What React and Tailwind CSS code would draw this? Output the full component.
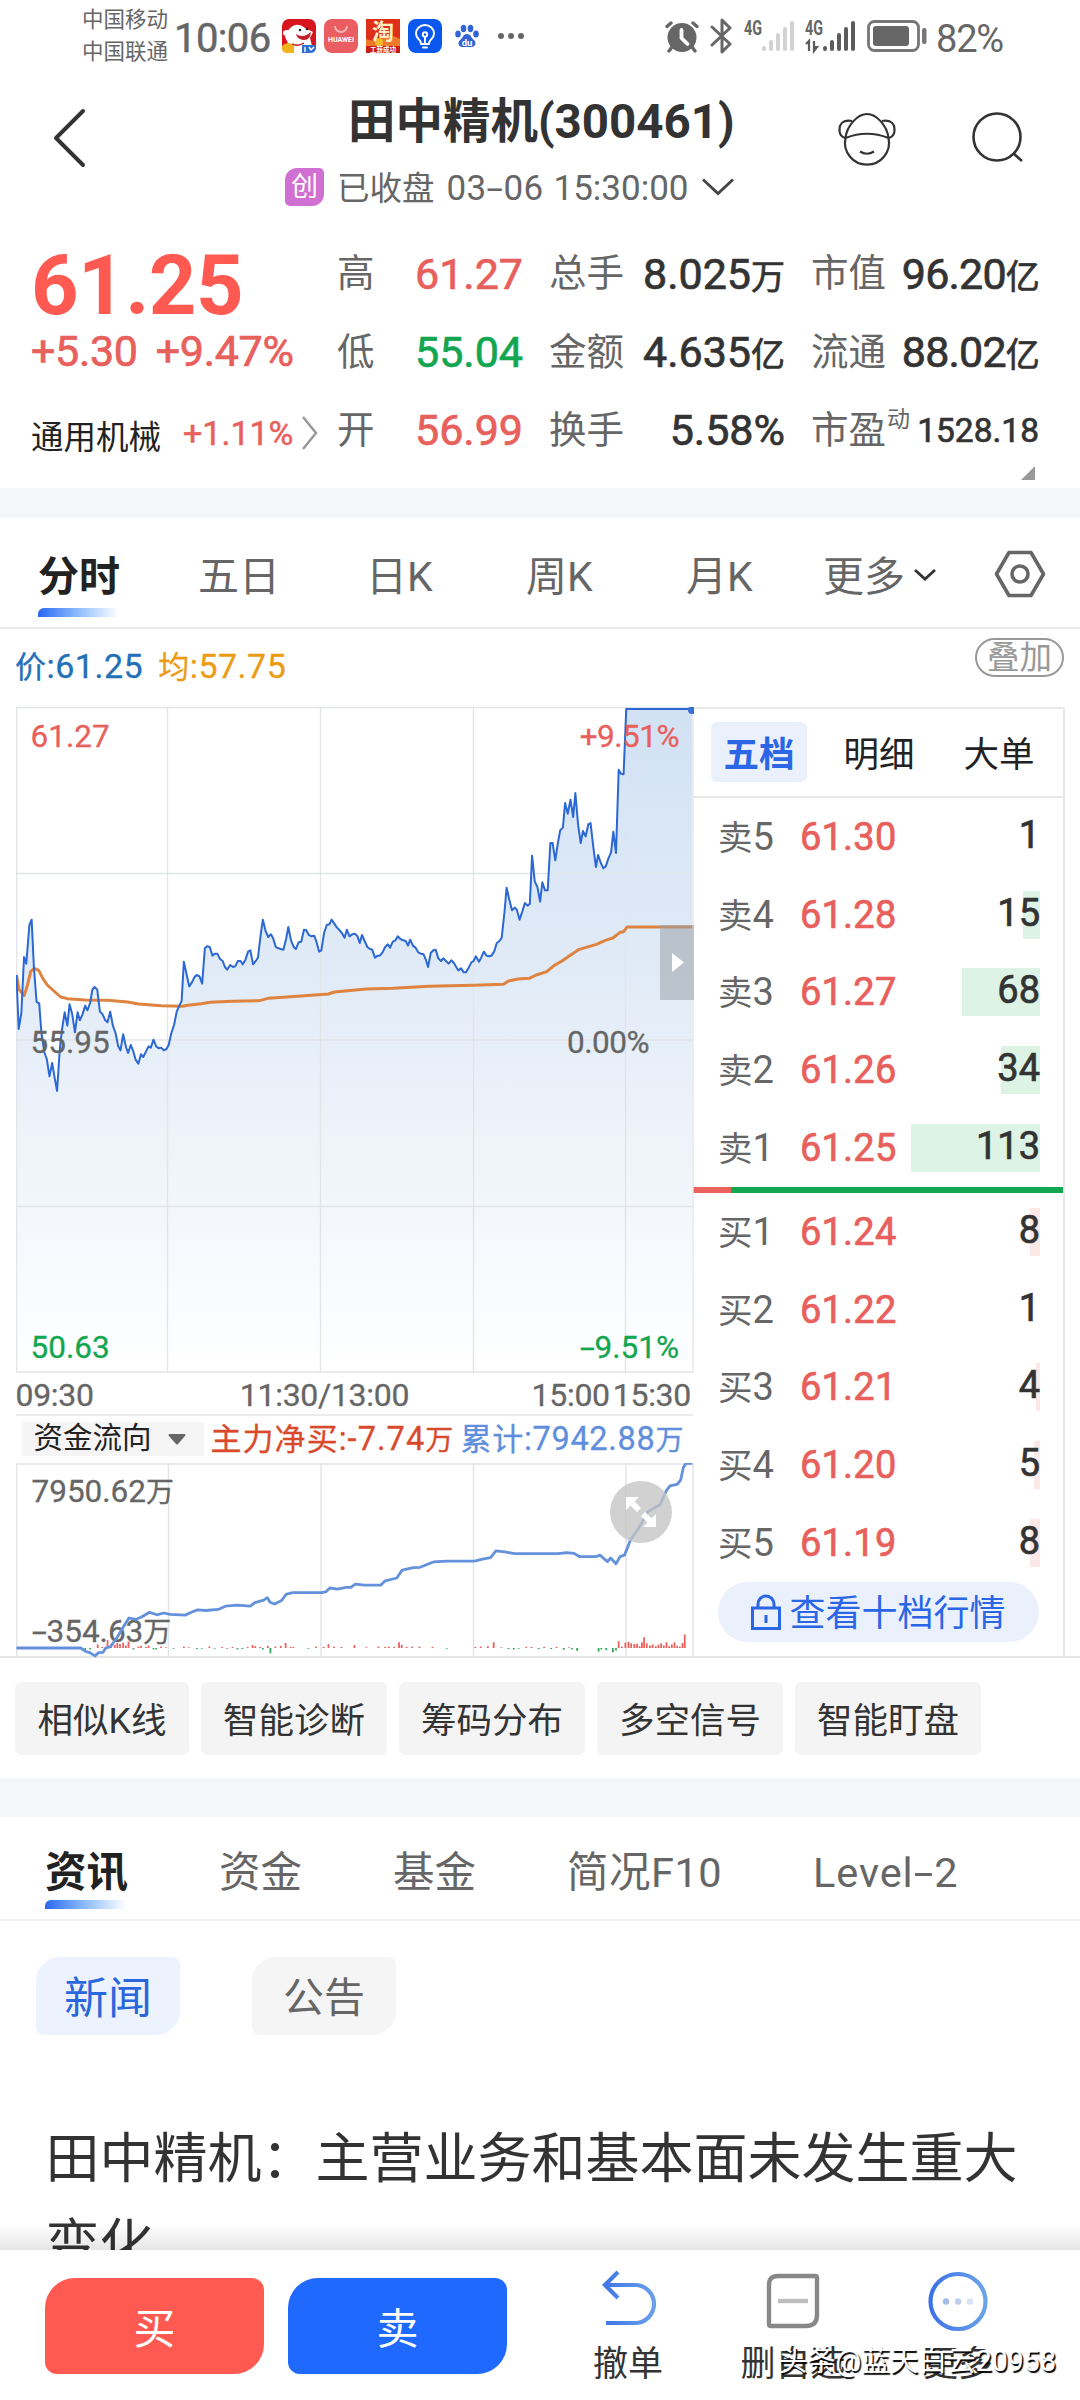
import { useState } from "react";

const stats = [
  [
    { label: "高", value: "61.27", color: "text-[#e8605c]" },
    { label: "低", value: "55.04", color: "text-[#12a650]" },
    { label: "开", value: "56.99", color: "text-[#e8605c]" },
  ],
  [
    { label: "总手", value: "8.025万" },
    { label: "金额", value: "4.635亿" },
    { label: "换手", value: "5.58%" },
  ],
  [
    { label: "市值", value: "96.20亿" },
    { label: "流通", value: "88.02亿" },
    { label: "市盈", sup: "动", value: "1528.18", small: true },
  ],
];

const sells = [
  { name: "卖5", price: "61.30", qty: 1, bar: 0 },
  { name: "卖4", price: "61.28", qty: 15, bar: 17 },
  { name: "卖3", price: "61.27", qty: 68, bar: 78 },
  { name: "卖2", price: "61.26", qty: 34, bar: 39 },
  { name: "卖1", price: "61.25", qty: 113, bar: 129 },
];

const buys = [
  { name: "买1", price: "61.24", qty: 8, bar: 10 },
  { name: "买2", price: "61.22", qty: 1, bar: 0 },
  { name: "买3", price: "61.21", qty: 4, bar: 4 },
  { name: "买4", price: "61.20", qty: 5, bar: 6 },
  { name: "买5", price: "61.19", qty: 8, bar: 10 },
];

const pricePoints =
  "36,826 41,988 47,940 53,772 58,792 65,676 70,660 75,800 81,906 87,912 92,1000 99,1060 104,1078 110,1130 116,1090 121,1130 127,1174 133,1050 138,990 144,938 150,978 155,914 161,944 167,998 173,938 178,962 184,944 190,918 195,932 201,910 206,870 211,862 217,870 223,936 229,944 235,962 240,968 246,936 252,978 258,1000 264,1040 269,1052 275,1004 281,1040 286,1060 292,1036 298,1056 303,1080 309,1092 315,1064 320,1072 326,1056 332,1040 337,1044 343,1020 349,1040 355,1046 360,1044 366,1052 372,1048 377,1036 383,1000 389,976 395,936 400,920 406,904 411,786 417,824 423,860 429,848 435,832 440,826 446,830 452,852 458,746 463,740 469,742 475,768 480,762 486,762 492,778 498,784 503,802 508,810 515,796 521,802 526,800 532,784 538,784 543,794 549,780 555,756 560,752 566,794 572,784 577,774 583,706 588,660 594,694 600,712 606,704 611,716 617,742 623,746 628,748 634,750 640,718 645,682 651,722 657,742 662,748 668,728 674,726 680,690 685,692 691,706 697,710 703,708 708,726 714,756 719,752 725,700 731,676 737,674 742,660 748,672 754,684 760,692 765,700 771,714 776,690 782,710 788,704 794,702 800,710 805,730 810,706 816,724 822,742 828,748 833,750 839,774 845,768 850,768 856,758 862,742 868,734 873,744 879,726 885,722 890,710 896,718 902,722 908,724 913,738 918,720 924,738 930,744 936,758 942,762 948,764 953,780 958,802 964,760 970,752 975,750 981,776 987,784 992,776 998,784 1004,792 1010,782 1016,790 1021,802 1026,812 1032,806 1038,818 1043,818 1049,804 1055,788 1060,784 1065,770 1072,786 1077,774 1083,756 1089,768 1094,770 1100,768 1106,756 1112,730 1118,724 1123,714 1129,640 1134,564 1140,600 1146,632 1152,624 1157,630 1163,660 1169,636 1175,610 1181,618 1186,612 1191,468 1197,546 1203,562 1209,606 1214,548 1220,572 1226,572 1232,430 1237,430 1243,482 1249,428 1254,392 1260,384 1265,310 1271,342 1277,300 1283,352 1288,280 1294,374 1300,430 1305,394 1311,410 1317,374 1322,370 1328,440 1334,502 1339,466 1345,490 1351,506 1356,500 1362,476 1368,458 1373,396 1379,460 1385,210 1390,222 1396,224 1402,28 1550,28";

const avgPoints =
  "36,826 42,870 53,888 60,860 68,815 76,806 86,812 95,836 105,856 120,874 135,892 150,897 190,901 240,902 285,907 310,913 360,918 408,920 420,917 450,912 470,908 520,905 580,903 600,896 650,891 735,883 748,877 820,868 880,866 960,860 1060,857 1127,854 1138,844 1160,838 1185,836 1200,826 1224,816 1240,798 1258,784 1275,768 1295,750 1335,734 1355,722 1372,715 1388,698 1396,696 1404,682 1550,682";

const flowPoints =
  "36,1536 180,1536 190,1545 200,1549 212,1558 220,1549 230,1548 236,1536 247,1532 262,1505 274,1480 288,1452 303,1456 315,1450 322,1445 334,1436 350,1443 366,1438 380,1442 414,1444 428,1436 442,1429 460,1431 488,1428 504,1419 530,1416 560,1419 570,1409 590,1402 598,1395 604,1408 614,1413 630,1403 640,1386 655,1381 720,1381 730,1378 738,1368 755,1371 775,1366 785,1366 795,1357 815,1360 852,1360 862,1348 888,1340 900,1318 925,1311 940,1310 970,1295 1000,1293 1062,1293 1080,1287 1098,1283 1110,1264 1130,1267 1152,1272 1250,1272 1268,1269 1285,1271 1297,1280 1335,1280 1343,1276 1360,1294 1367,1284 1379,1300 1388,1280 1398,1276 1412,1232 1430,1200 1440,1178 1450,1155 1478,1134 1492,1095 1500,1082 1516,1078 1524,1065 1530,1030 1536,1019 1550,1019";

// [x, height], negative is outflow
const flowBars = [
  [190, -5], [201, -4], [218, 10], [228, 3], [240, 22], [248, 12], [256, 9], [262, 14], [268, 11], [275, 15], [281, 7],
  [287, 18], [298, -4], [309, 4], [315, 6], [326, 3], [332, 7], [343, -4], [349, -4], [360, 4], [371, 2], [388, -2],
  [411, 4], [422, 2], [440, -3], [451, -2], [468, 4], [480, -2], [497, 3], [508, -2], [520, 3], [531, -4], [542, -3],
  [554, 3], [565, 8], [571, 5], [582, 3], [588, -4], [599, 6], [605, -15], [616, 4], [628, 6], [639, 14], [650, 3],
  [656, 3], [690, -2], [707, 4], [724, 3], [735, 11], [747, 4], [764, 3], [793, 8], [820, 2], [847, 4], [862, 3],
  [870, 4], [882, 3], [893, 16], [899, 9], [910, 3], [922, 4], [939, 4], [968, 3], [1000, -2], [1064, 3], [1076, 4],
  [1092, 5], [1105, 16], [1122, 2], [1138, -3], [1150, -4], [1161, -2], [1178, 3], [1190, 3], [1206, -3], [1218, 3],
  [1234, -3], [1246, 3], [1262, -5], [1274, 2], [1280, -4], [1292, -8], [1340, -10], [1346, -4], [1357, -6],
  [1372, -12], [1379, -7], [1385, 19], [1392, 4], [1400, 15], [1407, 17], [1413, 13], [1420, 11], [1426, 12],
  [1432, 5], [1437, 16], [1442, 30], [1448, 13], [1455, 7], [1461, 10], [1468, 5], [1474, 9], [1480, 13], [1486, 7],
  [1492, 16], [1498, 5], [1504, 10], [1510, 16], [1516, 6], [1522, 4], [1528, 14], [1533, 38],
];

// the plain hyphen is too short next to the digits
function Dash() {
  return <span className="mx-[0.1em] inline-block scale-x-[1.7]">-</span>;
}

function Signal({ color, faded }) {
  return (
    <svg className="ml-[11px] h-[34px] w-[50px] overflow-visible" viewBox="0 0 50 34">
      <text x="0" y="16" fontSize="20" fontWeight="700" fill="#666" textLength="18" lengthAdjust="spacingAndGlyphs">4G</text>
      {!faded && <path d="M1 25l3-3v10M9 22v10l3-4h-3" fill="none" stroke="#5c5c5c" strokeWidth="2.200" />}
      <g stroke={color} strokeWidth="4" strokeLinecap="round">
        <path d="M20 29v1M27 23v7M34 16v14M41 10v20M48 4v26" />
      </g>
    </svg>
  );
}

function StatusBar() {
  return (
    <div className="flex h-[72px] shrink-0 items-center justify-between pl-[82px] pr-[77px] text-[#666]">
      <div className="flex items-center">
        <div className="w-[92px] text-[21.5px] leading-[32px]">
          <div>中国移动</div>
          <div>中国联通</div>
        </div>
        <div className="w-[108px] pt-[5px] text-[40px] leading-none tracking-[-0.6px] [-webkit-text-stroke:0.5px]">10:06</div>
        <div className="flex items-center gap-[8px]">
          <svg className="h-[34px] w-[34px]" viewBox="0 0 34 34">
            <rect width="34" height="34" rx="7" fill="#d8141c" />
            <path d="M7 10 Q15 2 23 9 L31 13 L28 19 L30 27 V34 H5 L7 26 L3 18Z" fill="#fff" />
            <ellipse cx="5" cy="14" rx="4" ry="3" fill="#fff" />
            <path d="M14 15 Q21 20 29 13 Q28 22 21 21 Q15 20 14 15Z" fill="#c22028" />
            <circle cx="18" cy="11" r="1.300" fill="#222" />
            <circle cx="25" cy="10" r="1.300" fill="#222" />
            <path d="M10 25 Q16 28 22 24" stroke="#c22028" strokeWidth="1.500" fill="none" />
            <path d="M0 27 Q6 21 12 27 V34 H5 Q0 34 0 29Z" fill="#f2b21b" />
            <path d="M20 26 H34 V28 Q34 34 28 34 H20Z" fill="#2f6fd0" />
            <path d="M23 28v5M27 28l2 3 3-3" stroke="#fff" strokeWidth="1.400" fill="none" />
          </svg>
          <svg className="h-[34px] w-[34px]" viewBox="0 0 34 34">
            <rect width="34" height="34" rx="8" fill="#ea5d60" />
            <path d="M11 7a6 6 0 0 0 12 0" fill="none" stroke="#f6b4b4" strokeWidth="1.800" />
            <text x="17" y="23" textAnchor="middle" fontSize="7" fontWeight="700" fill="#fff" textLength="26">HUAWEI</text>
          </svg>
          <svg className="h-[34px] w-[34px]" viewBox="0 0 34 34">
            <rect width="34" height="34" fill="#dd2f1a" />
            <path d="M0 20 Q10 24 17 19 T34 20 V29 H0Z" fill="#f07a2c" />
            <circle cx="13" cy="23" r="4" fill="#f6b92e" />
            <text x="17" y="20" textAnchor="middle" fontSize="22" fontWeight="700" fill="#ffeec4">淘</text>
            <rect y="27" width="34" height="7" fill="#c81e12" />
            <text x="17" y="33" textAnchor="middle" fontSize="6.500" fontWeight="700" fill="#fff">工薪成功</text>
          </svg>
          <svg className="h-[34px] w-[34px]" viewBox="0 0 34 34">
            <rect width="34" height="34" rx="8" fill="#0a58ee" />
            <g fill="none" stroke="#fff" strokeWidth="1.900" strokeLinecap="round" strokeLinejoin="round">
              <path d="M13 25 Q13 22 10.500 20 Q8 17.500 8 14.500 a9 8.500 0 0 1 18 0 Q26 17.500 23.500 20 Q21 22 21 25 Z" />
              <path d="M17 18v7M15 28.500h4" />
              <circle cx="17" cy="15.500" r="2.200" />
            </g>
          </svg>
          <svg className="h-[34px] w-[34px]" viewBox="0 0 34 34">
            <g fill="#3264d8">
              <ellipse cx="8" cy="15" rx="2.800" ry="3.500" />
              <ellipse cx="13.500" cy="9.500" rx="2.800" ry="3.700" />
              <ellipse cx="20.500" cy="9.500" rx="2.800" ry="3.700" />
              <ellipse cx="26" cy="15" rx="2.800" ry="3.500" />
              <path d="M17 15 c-4 0-4 4-7 6 c-3 3-1 7 2 7 h10 c3 0 5-4 2-7 c-3-2-3-6-7-6z" />
            </g>
            <text x="17" y="26.500" textAnchor="middle" fontSize="9.500" fontWeight="700" fill="#fff">du</text>
          </svg>
          <div className="ml-[6px] flex gap-[4px]">
            <i className="h-[6px] w-[6px] rounded-full bg-[#666]" />
            <i className="h-[6px] w-[6px] rounded-full bg-[#666]" />
            <i className="h-[6px] w-[6px] rounded-full bg-[#666]" />
          </div>
        </div>
      </div>

      <div className="flex items-center">
        <svg className="h-[34px] w-[34px]" viewBox="0 0 34 34">
          <circle cx="17" cy="18.500" r="14.500" fill="#666" />
          <g fill="none" stroke="#666" strokeWidth="3.400" strokeLinecap="round">
            <path d="M2 7.500 L6 4M28 4 L32 7.500M7 28l-3 4M27 28l3 4" />
          </g>
          <path d="M16.500 11v8l6 6" fill="none" stroke="#fff" strokeWidth="3.800" strokeLinecap="round" />
        </svg>
        <svg className="ml-[11px] h-[36px] w-[23px]" viewBox="0 0 23 36" fill="none" stroke="#666" strokeWidth="3" strokeLinejoin="round" strokeLinecap="round">
          <path d="M2 9 L20 26 L12 34 V2 L20 10 L2 27" />
        </svg>
        <Signal color="#d2d2d2" faded />
        <Signal color="#5c5c5c" />
        <svg className="ml-[12px] h-[32px] w-[60px]" viewBox="0 0 60 32">
          <rect x="1.500" y="1.500" width="50" height="29" rx="6" fill="none" stroke="#777" strokeWidth="2.800" />
          <rect x="6" y="6" width="36" height="20" rx="3" fill="#666" />
          <rect x="55" y="8" width="4.500" height="16" rx="2" fill="#777" />
        </svg>
        <div className="ml-[9px] pt-[5px] text-[38px] leading-none tracking-[-1.2px]">82%</div>
      </div>
    </div>
  );
}

function Header() {
  return (
    <div className="flex h-[158px] shrink-0 items-start pl-[52px]">
      <svg className="mt-[36px] h-[60px] w-[36px]" viewBox="0 0 36 60" fill="none" stroke="#333" strokeWidth="4" strokeLinecap="round" strokeLinejoin="round">
        <path d="M31 3 L4 30 L31 57" />
      </svg>
      <div className="ml-[197px] w-[553px]">
        <div className="ml-[63px] mt-[25px] text-[47.500px] font-bold leading-[50px] text-[#333]">田中精机(300461)</div>
        <div className="mt-[19px] flex items-center text-[#666]">
          <div className="flex h-[38px] w-[39px] items-center justify-center rounded-[5px] rounded-br-[12px] rounded-tl-[12px] bg-[#d070d2] text-[27px] leading-none text-white">创</div>
          <div className="ml-[13px] pt-[3px] text-[32.500px] leading-[38px]">已收盘</div>
          <div className="ml-[12px] w-[107px] pt-[4px] text-[35px] leading-[38px] tracking-[0.3px]">03<Dash />06</div>
          <div className="w-[148px] pt-[4px] text-[35px] leading-[38px]">15:30:00</div>
          <svg className="h-[18px] w-[32px]" viewBox="0 0 32 18" fill="none" stroke="#444" strokeWidth="2.800">
            <path d="M1 1.500 L16 15.500 L31 1.500" />
          </svg>
        </div>
      </div>
      <svg className="mt-[40px] h-[54px] w-[58px]" viewBox="0 0 58 54" fill="none" stroke="#333" strokeWidth="2.200">
        <path d="M7.500 26 C9 13 20 2 29 2 C38 2 49 13 50.500 26" />
        <path d="M7.500 26 A22 22 0 1 0 50.500 26 Q29 17.500 7.500 26Z" />
        <path d="M14 9 Q1 7 1.500 19 Q2 25 7.500 26M44 9 Q57 7 56.500 19 Q56 25 50.500 26" />
        <path d="M22 39.500 Q29 44 36 39.500" />
      </svg>
      <svg className="ml-[75px] mt-[40px] h-[54px] w-[54px]" viewBox="0 0 54 54" fill="none" stroke="#333" strokeWidth="2.600">
        <circle cx="26" cy="25" r="23.500" />
        <path d="M42 41 L51 49" />
      </svg>
    </div>
  );
}

function Quote() {
  return (
    <div className="flex h-[258px] shrink-0 pl-[31px]">
      <div className="w-[306px] text-[#e8605c]">
        <div className="pt-[14px] text-[83px] font-bold leading-[84px] tracking-[-0.5px] text-[#ff5a52]">61.25</div>
        <div className="flex gap-[18px] pt-[1px] text-[43px] leading-[44px] tracking-[-0.3px] [-webkit-text-stroke:0.7px]">
          <span>+5.30</span>
          <span>+9.47%</span>
        </div>
        <div className="mt-[35px] flex items-center">
          <span className="pt-[10px] text-[32.500px] leading-[40px] text-[#222]">通用机械</span>
          <span className="ml-[22px] text-[34px] leading-[40px] [-webkit-text-stroke:0.5px]">+1.11%</span>
          <svg className="ml-[8px] h-[34px] w-[16px]" viewBox="0 0 16 34" fill="none" stroke="#999" strokeWidth="2.500">
            <path d="M1 1 L14 17 L1 33" />
          </svg>
        </div>
      </div>
      <div>
        <div className="grid grid-cols-[186px_236px_228px] gap-x-[26px] pt-[5px]">
          {stats.map((col, i) => (
            <div key={i}>
              {col.map((s) => (
                <div key={s.label} className="flex h-[78.300px] items-center justify-between leading-none">
                  <span className="flex text-[37.500px] text-[#666]">
                    {s.label}
                    {s.sup && <sup className="top-0 -mt-[4px] ml-[1px] text-[23px] leading-none">{s.sup}</sup>}
                  </span>
                  <span className={`[-webkit-text-stroke:0.7px] ${s.small ? "text-[33.500px]" : "text-[43px]"} ${i === 2 && !s.small ? "tracking-[-0.8px]" : ""} ${s.color || "text-[#333]"}`}>
                    {s.value.replace(/[万亿]/, "")}
                    {/[万亿]/.test(s.value) && <span className="text-[34px]">{s.value.slice(-1)}</span>}
                  </span>
                </div>
              ))}
            </div>
          ))}
        </div>
        <svg className="-mt-[4px] ml-[684px] h-[14px] w-[14px]" viewBox="0 0 14 14">
          <path d="M14 0V14H0Z" fill="#999" />
        </svg>
      </div>
    </div>
  );
}

function PeriodTabs() {
  return (
    <div className="flex h-[111px] shrink-0 items-start border-b-2 border-[#e8e8e8] pl-[38px] text-[41px] leading-[44px] text-[#666]">
      <div className="mt-[37px] w-[160px]">
        <div className="font-bold text-[#222]">分时</div>
        <div className="mt-[9px] h-[9px] w-[81px] rounded-tl-[6px] bg-linear-to-r from-[#2a66f0] via-[#8fbcfb] to-white" />
      </div>
      <div className="mt-[37px] w-[168px]">五日</div>
      <div className="mt-[37px] w-[160px]">日K</div>
      <div className="mt-[37px] w-[160px]">周K</div>
      <div className="mt-[37px] w-[137px]">月K</div>
      <div className="mt-[37px] flex w-[171px] items-center">
        更多
        <svg className="-mt-[4px] ml-[9px] h-[14px] w-[22px]" viewBox="0 0 22 14" fill="none" stroke="#333" strokeWidth="2.800">
          <path d="M1 2 L11 11 L21 2" />
        </svg>
      </div>
      <svg className="mt-[32px] h-[48px] w-[52px]" viewBox="0 0 52 48" fill="none" stroke="#666" strokeWidth="3.600" strokeLinejoin="round">
        <path d="M15 2.500 H37 L49.500 24 L37 45.500 H15 L2.500 24Z" />
        <circle cx="26" cy="24" r="8" />
      </svg>
    </div>
  );
}

function PriceChart() {
  return (
    <div className="relative h-[666px]">
      <svg className="h-[666px] w-[678px]" viewBox="0 0 678 666">
        <defs>
          <linearGradient id="area" x1="0" y1="0" x2="0" y2="1">
            <stop offset="0" stopColor="#d2e2f4" />
            <stop offset="0.400" stopColor="#e1ebf7" />
            <stop offset="0.700" stopColor="#f0f5fb" />
            <stop offset="1" stopColor="#ffffff" />
          </linearGradient>
        </defs>
        <g transform="scale(0.44643 0.33333) translate(-35 -22)">
          <polygon points={`36,2016 ${pricePoints} 1550,2016`} fill="url(#area)" />
        </g>
        <g stroke="#e2e5e8" strokeWidth="1.300" fill="none">
          <path d="M0.700 0.700H677V665H0.700Z M151.500 0V666M304.500 0V666M457.500 0V666M609.500 0V666M0 166.500H677M0 333H677M0 499.500H677" />
        </g>
        <g transform="scale(0.44643 0.33333) translate(-35 -22)" fill="none" strokeLinejoin="round">
          <polyline points={avgPoints} stroke="#de8340" strokeWidth="3" vectorEffect="non-scaling-stroke" />
          <polyline points={pricePoints} stroke="#2c68d4" strokeWidth="2" vectorEffect="non-scaling-stroke" />
        </g>
        <circle cx="676" cy="3" r="4" fill="#3672d6" />
        <rect x="644" y="218" width="34" height="75" fill="#9aa3aa" fillOpacity="0.550" />
        <path d="M656 246 L668 255.500 L656 265Z" fill="#fff" />
      </svg>
      <div className="absolute inset-0 flex flex-col justify-between pb-[9px] pl-[15px] pr-[14px] pt-[14px] text-[31.500px] leading-[32px] [-webkit-text-stroke:0.3px]">
        <div className="flex justify-between text-[#e8605c]">
          <span>61.27</span>
          <span className="tracking-[-0.5px]">+9.51%</span>
        </div>
        <div className="flex justify-between pr-[30px] pt-[2px] text-[#666]">
          <span>55.95</span>
          <span className="tracking-[-0.5px]">0.00%</span>
        </div>
        <div className="flex justify-between text-[#12a650]">
          <span>50.63</span>
          <span><Dash />9.51%</span>
        </div>
      </div>
    </div>
  );
}

function FlowChart() {
  return (
    <div className="relative h-[195px]">
      <svg className="h-[195px] w-[678px]" viewBox="0 0 678 195">
        <path d="M0.700 195V1H677V195M152.500 0V195M305 0V195M457.500 0V195M610 0V195" fill="none" stroke="#e2e5e8" strokeWidth="1.500" />
        <g transform="scale(0.44643 0.35714) translate(-35 -1018)">
          {flowBars.map(([x, h]) => (
            <rect key={x} x={x - 2} y={h > 0 ? 1536 - h : 1536} width="4" height={Math.abs(h)} fill={h > 0 ? "#e8605c" : "#2fa85c"} />
          ))}
        </g>
      </svg>
      <div className="absolute inset-0 flex flex-col justify-between pb-[8px] pl-[16px] pt-[12px] text-[31.500px] leading-[34px] text-[#666] [-webkit-text-stroke:0.3px]">
        <div>7950.62<span className="text-[28px]">万</span></div>
        <div><Dash />354.63<span className="text-[28px]">万</span></div>
      </div>
      <svg className="absolute inset-0 h-[195px] w-[678px]" viewBox="0 0 678 195">
        <g transform="scale(0.44643 0.35714) translate(-35 -1018)">
          <polyline points={flowPoints} fill="none" stroke="#6391dc" strokeWidth="2.800" strokeLinejoin="round" vectorEffect="non-scaling-stroke" />
        </g>
        <circle cx="625" cy="49" r="31" fill="#c4c4c4" fillOpacity="0.780" />
        <path d="M610 34h13l-4.500 4.500 6.500 6.500-4 4-6.500-6.500-4.500 4.500z M640 64h-13l4.500-4.500-6.500-6.500 4-4 6.500 6.500 4.500-4.500z" fill="#fff" />
      </svg>
    </div>
  );
}

function BookRow({ row, barColor }) {
  return (
    <div className="flex h-[77.800px] items-center pl-[25px] pr-[23px] leading-none">
      <div className="w-[82px] text-[#666]">
        <span className="text-[34.500px]">{row.name[0]}</span>
        <span className="text-[38px]">{row.name[1]}</span>
      </div>
      <div className="text-[38px] tracking-[0.2px] text-[#e8605c] [-webkit-text-stroke:0.7px]">{row.price}</div>
      <div className="relative flex h-[48px] flex-1 items-center justify-end">
        <div className={`absolute inset-y-0 right-0 ${barColor}`} style={{ width: row.bar }} />
        <span className="relative pb-[4px] text-[38px] text-[#333] [-webkit-text-stroke:0.7px]">{row.qty}</span>
      </div>
    </div>
  );
}

function OrderBook() {
  const [tab, setTab] = useState("五档");
  return (
    <div className="h-[951px] w-[372px] border-r-2 border-t-2 border-[#e8e8e8]">
      <div className="flex h-[89.500px] items-center gap-[24px] border-b-2 border-[#e8e8e8] pl-[18px] text-[35.500px] leading-none">
        {["五档", "明细", "大单"].map((t) => (
          <button
            key={t}
            onClick={() => setTab(t)}
            className={`flex h-[60px] w-[96px] shrink-0 items-center justify-center rounded-[6px] pt-[6px] ${t === tab ? "bg-[#eaf1fd] font-bold text-[#2a66e6]" : "text-[#222]"}`}
          >
            {t}
          </button>
        ))}
      </div>
      {sells.map((r) => (
        <BookRow key={r.name} row={r} barColor="bg-[#ddf3e5]" />
      ))}
      <div className="flex h-[6px]">
        <div className="w-[38px] bg-[#ea615e]" />
        <div className="flex-1 bg-[#12a650]" />
      </div>
      {buys.map((r) => (
        <BookRow key={r.name} row={r} barColor="bg-[#fde8e8]" />
      ))}
      <div className="ml-[25px] flex h-[60px] w-[321px] items-center justify-center gap-[8px] rounded-full bg-[#eaf1fd] text-[36px] leading-none text-[#2a66e6]">
        <svg className="h-[36px] w-[30px]" viewBox="0 0 30 36" fill="none" stroke="#2a66e6" strokeWidth="3">
          <rect x="1.500" y="14" width="27" height="20.500" />
          <path d="M7 14V10a8 8 0 0 1 16 0v4M15 21v8" />
        </svg>
        <span className="pt-[4px]">查看十档行情</span>
      </div>
    </div>
  );
}

function ChartArea() {
  return (
    <div className="h-[1029px] shrink-0 border-b-2 border-[#e6e6e6]">
      <div className="flex h-[77.500px] justify-between pl-[15px] pr-[16px]">
        <div className="flex gap-[15px] pt-[20px] text-[34px] leading-[34px] tracking-[0.5px] [-webkit-text-stroke:0.3px]">
          <span className="text-[#2470b8]"><span className="text-[31px]">价</span>:61.25</span>
          <span className="text-[#eb9c14]"><span className="text-[31px]">均</span>:57.75</span>
        </div>
        <div className="mt-[9px] flex h-[39px] w-[89px] items-center justify-center rounded-full border-2 border-[#999] pt-[2px] text-[32.500px] leading-none text-[#999]">叠加</div>
      </div>
      <div className="flex pl-[15.500px]">
        <div className="w-[677.500px]">
          <PriceChart />
          <div className="flex h-[43px] justify-between border-b-2 border-[#ebebeb] pr-[2px] text-[32px] leading-[45px] tracking-[-0.3px] text-[#666] [-webkit-text-stroke:0.3px]">
            <span className="w-[226px]">09:30</span>
            <span>11:30/13:00</span>
            <span className="flex w-[284px] justify-end gap-[3px]">
              <span>15:00</span>
              <span>15:30</span>
            </span>
          </div>
          <div className="flex h-[47px] items-center whitespace-nowrap leading-none">
            <div className="ml-[6px] flex h-[34px] w-[182px] shrink-0 items-center bg-[#f5f5f5] pl-[12px] text-[29.500px] text-[#222]">
              资金流向
              <svg className="ml-[16px] h-[11px] w-[18px]" viewBox="0 0 18 11">
                <path d="M1 0H17Q18 1 17 2L10 10Q9 11 8 10L1 2Q0 1 1 0Z" fill="#666" />
              </svg>
            </div>
            <div className="ml-[7px] w-[250px] text-[32.500px] tracking-[1.050px] text-[#d84a2c] [-webkit-text-stroke:0.3px]"><span className="text-[31px]">主力净买</span>:-7.74<span className="text-[28px]">万</span></div>
            <div className="text-[32.500px] tracking-[0.700px] text-[#5f8fdc] [-webkit-text-stroke:0.3px]"><span className="text-[31px]">累计</span>:7942.88<span className="text-[28px]">万</span></div>
          </div>
          <FlowChart />
        </div>
        <OrderBook />
      </div>
    </div>
  );
}

function BottomBar() {
  return (
    <div className="relative flex h-[150px] shrink-0 bg-white pl-[45px] pt-[28px]">
      <button className="h-[96px] w-[219px] rounded-[12px] rounded-br-[30px] rounded-tl-[30px] bg-[#ff5a52] pt-[7px] text-[42px] leading-none text-white">买</button>
      <button className="ml-[24px] h-[96px] w-[219px] rounded-[12px] rounded-br-[30px] rounded-tl-[30px] bg-[#1f69ff] pt-[7px] text-[42px] leading-none text-white">卖</button>
      <div className="-mt-[8px] ml-[66px] grid grid-cols-[110px_220px_110px] text-[35px] leading-none text-[#333]">
        <div className="flex flex-col items-center">
          <svg className="h-[62px] w-[62px]" viewBox="0 0 62 62" fill="none" strokeWidth="4.200">
            <defs>
              <linearGradient id="blue" gradientUnits="userSpaceOnUse" x1="4" y1="0" x2="58" y2="0">
                <stop offset="0" stopColor="#3c72e8" />
                <stop offset="1" stopColor="#6aa2ea" />
              </linearGradient>
            </defs>
            <path d="M21 2 L8 15 L21 28M8 15 H38 A19 19 0 0 1 38 53 H9" stroke="url(#blue)" />
          </svg>
          <span className="mt-[15px]">撤单</span>
        </div>
        <div className="flex flex-col items-center">
          <svg className="h-[62px] w-[54px]" viewBox="0 0 54 62" fill="none" stroke="#888" strokeWidth="4.400">
            <path d="M12 6H49Q51 6 51 8V45Q51 56 40 56H5Q3 56 3 54V15Q3 6 12 6Z" />
            <path d="M12 31H42" stroke="#bdbdbd" />
          </svg>
          <span className="mt-[15px]">删自选</span>
        </div>
        <div className="flex flex-col items-center">
          <svg className="h-[62px] w-[62px]" viewBox="0 0 62 62">
            <circle cx="31" cy="31.500" r="27.500" fill="none" stroke="url(#blue)" strokeWidth="4.200" />
            <circle cx="19" cy="31.500" r="3.200" fill="#a3bce8" />
            <circle cx="31" cy="31.500" r="3.200" fill="#bdcdea" />
            <circle cx="43" cy="31.500" r="3.200" fill="#d9e2f0" />
          </svg>
          <span className="mt-[15px]">更多</span>
        </div>
      </div>
      <div className="absolute right-[24px] top-[94px] whitespace-nowrap text-[28.600px] leading-[34px] text-white [text-shadow:1.500px_1.500px_1px_#000]">头条@蓝天白云20958</div>
    </div>
  );
}

export default function App() {
  return (
    <div className="flex h-[2400px] w-[1080px] flex-col overflow-hidden bg-white font-['Roboto','Noto_Sans_CJK_SC',sans-serif]">
      <div className="relative flex h-[2250px] flex-col overflow-hidden">
        <StatusBar />
        <Header />
        <Quote />
        <div className="h-[30px] shrink-0 bg-[#f5f6f7]" />
        <PeriodTabs />
        <ChartArea />

        <div className="flex h-[120px] shrink-0 gap-[12px] pl-[15px] pt-[24px] text-[35.500px] leading-none text-[#333]">
          <div className="flex h-[73px] w-[174px] items-center justify-center rounded-[6px] bg-[#f4f4f4] pt-[6px]">相似K线</div>
          <div className="flex h-[73px] w-[186px] items-center justify-center rounded-[6px] bg-[#f4f4f4] pt-[6px]">智能诊断</div>
          <div className="flex h-[73px] w-[186px] items-center justify-center rounded-[6px] bg-[#f4f4f4] pt-[6px]">筹码分布</div>
          <div className="flex h-[73px] w-[186px] items-center justify-center rounded-[6px] bg-[#f4f4f4] pt-[6px]">多空信号</div>
          <div className="flex h-[73px] w-[186px] items-center justify-center rounded-[6px] bg-[#f4f4f4] pt-[6px]">智能盯盘</div>
        </div>
        <div className="h-[39px] shrink-0 bg-[#f4f6f8]" />

        <div className="flex h-[104px] shrink-0 border-b-2 border-[#f0f0f0] pl-[45px] pt-[34px] text-[41.500px] leading-[44px] text-[#666]">
          <div className="w-[174px]">
            <div className="font-bold text-[#222]">资讯</div>
            <div className="mt-[5px] h-[9px] w-[81px] rounded-tl-[6px] bg-linear-to-r from-[#2a66f0] via-[#8fbcfb] to-white" />
          </div>
          <div className="w-[174px]">资金</div>
          <div className="w-[174px]">基金</div>
          <div className="w-[246px] tracking-[0.5px]">简况F10</div>
          <div className="tracking-[0.9px]">Level<Dash />2</div>
        </div>

        <div className="flex gap-[72px] pl-[36px] pt-[36px] leading-none">
          <div className="flex h-[78px] w-[144px] items-center justify-center rounded-[8px] rounded-br-[24px] rounded-tl-[24px] bg-[#edf3fe] pt-[5px] text-[44px] text-[#2a66dc]">新闻</div>
          <div className="flex h-[78px] w-[144px] items-center justify-center rounded-[8px] rounded-br-[24px] rounded-tl-[24px] bg-[#f5f5f5] pt-[5px] text-[41px] text-[#666]">公告</div>
        </div>
        <div className="shrink-0 pl-[45.500px] pt-[82px] text-[54px] leading-[86px] text-[#333]">
          田中精机：主营业务和基本面未发生重大
          <br />
          变化
        </div>
        <div className="absolute inset-x-0 bottom-0 h-[26px] bg-linear-to-b from-black/0 to-black/10" />
      </div>
      <BottomBar />
    </div>
  );
}
